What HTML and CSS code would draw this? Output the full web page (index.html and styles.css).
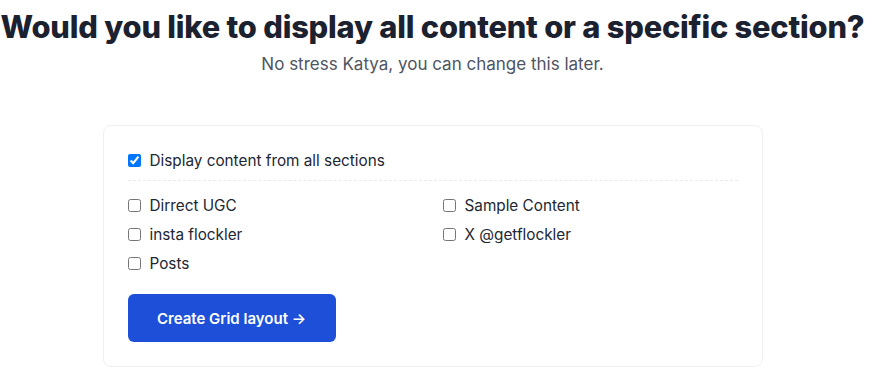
FILE: index.html
```html
<!DOCTYPE html>
<html lang="en">
<head>
    <meta charset="UTF-8">
    <meta name="viewport" content="width=device-width, initial-scale=1.0">
    <title>Choose sections</title>
    <link rel="stylesheet" href="styles.css">
</head>
<body>
    <div class="container">
        <h1>Would you like to display all content or a specific section?</h1>
        <p class="subtitle">No stress Katya, you can change this later.</p>

        <div class="card">
            <label class="option all">
                <input type="checkbox" checked>
                <span>Display content from all sections</span>
            </label>

            <div class="sections">
                <label class="option"><input type="checkbox"><span>Dirrect UGC</span></label>
                <label class="option"><input type="checkbox"><span>Sample Content</span></label>
                <label class="option"><input type="checkbox"><span>insta flockler</span></label>
                <label class="option"><input type="checkbox"><span>X @getflockler</span></label>
                <label class="option"><input type="checkbox"><span>Posts</span></label>
            </div>

            <button class="create">Create Grid layout &rarr;</button>
        </div>
    </div>
</body>
</html>
```

FILE: styles.css
```css
body {
    margin: 0;
    font-family: Inter, "Noto Sans", sans-serif;
    background-color: #fff;
    color: #1f2330;
}
.container {
    display: flex;
    flex-direction: column;
    align-items: center;
    padding: 8px 7px 0 0;
}
h1 {
    margin: 0;
    font-size: 30.8px;
    font-weight: 800;
    letter-spacing: -0.2px;
    line-height: 38px;
    color: #1c2130;
    white-space: nowrap;
}
.subtitle {
    margin: 8px 0 0;
    font-size: 17px;
    color: #4f5463;
}
.card {
    margin-top: 51px;
    width: 660px;
    box-sizing: border-box;
    border: 1px solid #eef0f6;
    border-radius: 8px;
    padding: 20px 24px 24px 24px;
}
.option {
    display: flex;
    align-items: center;
    gap: 9px;
    font-size: 15.3px;
    color: #222633;
    height: 29px;
}
.option input {
    margin: 0;
    width: 13px;
    height: 13px;
}
.all {
    padding-bottom: 5px;
    border-bottom: 1px dashed #e8eaf0;
    margin-bottom: 10px;
}
.sections {
    display: grid;
    grid-template-columns: 1fr 1fr;
    column-gap: 20px;
    margin-bottom: 16px;
}
.create {
    background-color: #1d4fd8;
    color: #fff;
    border: none;
    border-radius: 6px;
    width: 208px;
    height: 48px;
    font-family: Inter, "Noto Sans", sans-serif;
    font-size: 15px;
    font-weight: 600;
    cursor: pointer;
}
```
